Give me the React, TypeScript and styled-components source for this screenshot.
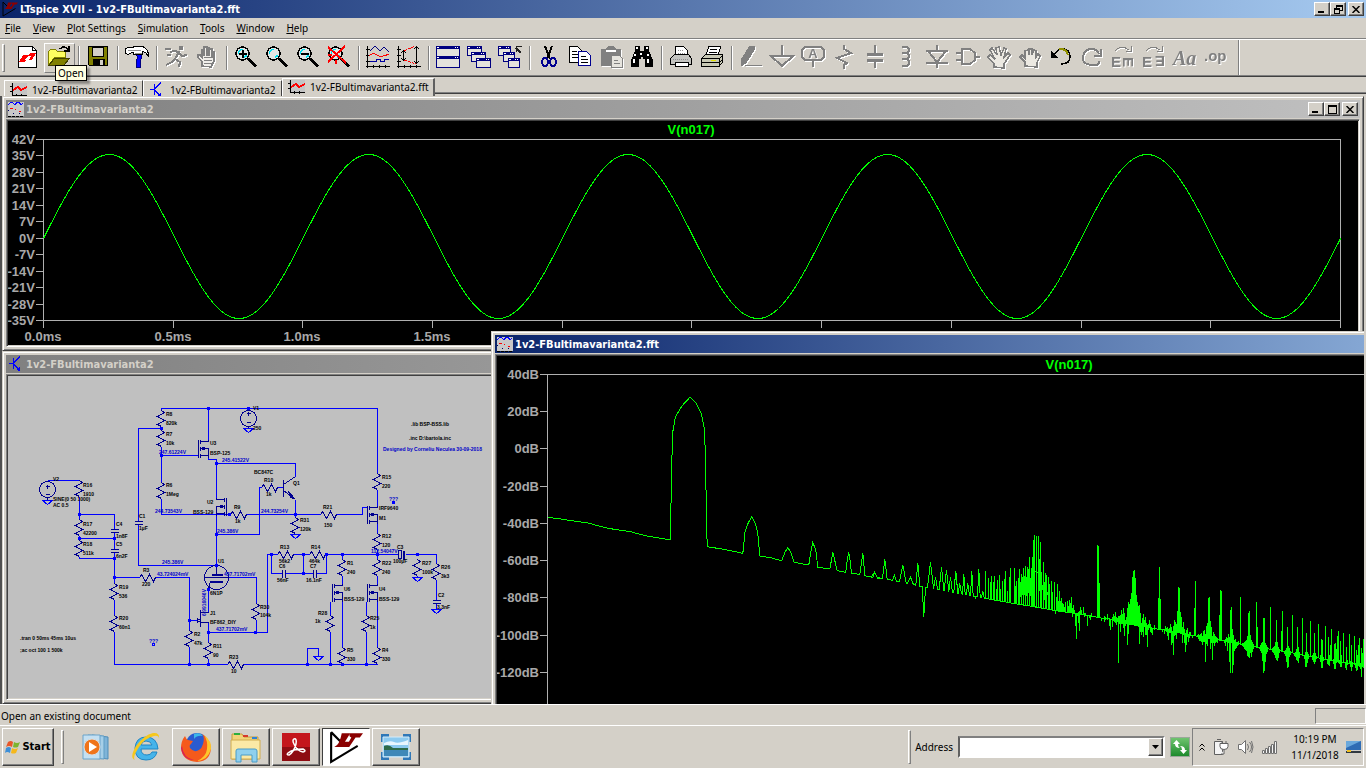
import React from "react";
import styled, { createGlobalStyle, css } from "styled-components";

const face = "#d4d0c8";
const ui = `"Noto Sans", "Liberation Sans", sans-serif`;
const captionFont = `"DejaVu Sans Condensed", "DejaVu Sans", sans-serif`;

const Global = createGlobalStyle`
  *, *::before, *::after { box-sizing: border-box; }
  body { margin: 0; background: ${face}; font: 10px/14px ${ui}; color: #000; }
  button, input { font: inherit; color: inherit; padding: 0; margin: 0; }
  svg { display: block; flex: none; }
`;

const raised = css`
  border: 1px solid;
  border-color: #fff #404040 #404040 #fff;
  box-shadow: inset -1px -1px 0 #808080;
  background: ${face};
`;

const Desktop = styled.div`
  display: flex;
  flex-direction: column;
  height: 100vh;
  min-height: 500px;
  overflow: hidden;
`;

const Caption = styled.header<{ $tone: "active" | "idle" | "app" }>`
  display: flex;
  align-items: center;
  flex: none;
  height: 18px;
  padding: 0 2px;
  gap: 2px;
  color: ${(p) => (p.$tone === "idle" ? "#d4d0c8" : "#fff")};
  background: ${(p) =>
    p.$tone === "idle"
      ? "linear-gradient(90deg, #808080, #c0c0c0)"
      : "linear-gradient(90deg, #0a246a, #a6caf0)"};
`;

const CaptionText = styled.h1`
  flex: 1;
  margin: 0;
  padding-top: 1px;
  font: bold 11px/17px ${captionFont};
  white-space: nowrap;
`;

const CaptionButtons = styled.div`
  display: flex;
  button:last-child { margin-left: 2px; }
`;

const CaptionButton = styled.button`
  ${raised}
  display: grid;
  place-items: center;
  width: 16px;
  height: 14px;
`;

const MenuBar = styled.nav`
  display: flex;
  flex: none;
  height: 20px;
  align-items: center;
`;

const MenuItem = styled.button`
  border: 0;
  background: none;
  padding: 0 6px 1px;
  &:first-child { padding-left: 5px; }
  &::first-letter { text-decoration: underline; }
`;

const ToolBar = styled.div`
  display: flex;
  flex: none;
  align-items: center;
  height: 39px;
  border-top: 1px solid #808080;
  border-bottom: 1px solid #404040;
  box-shadow: inset 0 1px 0 #fff, inset 0 -1px 0 #808080;
`;

const Gripper = styled.span`
  width: 3px;
  height: 28px;
  margin: 0 8px 0 2px;
  border: 1px solid;
  border-color: #fff #808080 #808080 #fff;
`;

const Divider = styled.span`
  width: 2px;
  height: 24px;
  margin: 0 3px;
  background: linear-gradient(90deg, #808080 50%, #fff 50%);
`;

const ToolEnd = styled.span`
  width: 2px;
  height: 35px;
  margin-left: 6px;
  background: linear-gradient(90deg, #808080 50%, #fff 50%);
`;

const ToolButton = styled.button<{ $hot?: boolean }>`
  position: relative;
  display: grid;
  place-items: center;
  width: 31px;
  height: 30px;
  padding: 0 1px 2px 0;
  background: none;
  border: 1px solid;
  border-color: ${(p) => (p.$hot ? "#fff #808080 #808080 #fff" : "transparent")};
  &:disabled svg { filter: drop-shadow(1px 1px 0 #fff); color: #808080; }
`;

const Tip = styled.span`
  position: absolute;
  z-index: 5;
  left: 10px;
  top: 21px;
  padding: 0 2px;
  border: 1px solid #000;
  background: #ffffe1;
  box-shadow: 3px 3px 2px rgba(0, 0, 0, 0.35);
`;

const TabStrip = styled.div`
  display: flex;
  flex: none;
  height: 19px;
  padding-left: 4px;
`;

const Tab = styled.button<{ $on?: boolean }>`
  display: flex;
  align-items: center;
  gap: 5px;
  flex: none;
  width: ${(p) => (p.$on ? 153 : 139)}px;
  height: ${(p) => (p.$on ? 18 : 16)}px;
  margin-top: ${(p) => (p.$on ? 1 : 3)}px;
  padding: ${(p) => (p.$on ? "0 0 1px 5px" : "3px 0 0 5px")};
  border: 0;
  border-top: 1px solid #fff;
  border-left: 1px solid #fff;
  border-right: ${(p) => (p.$on ? "2px solid #606060" : "1px solid #404040")};
  background: ${face};
  white-space: nowrap;
`;

const TabFill = styled.span`
  flex: 1;
  height: 17px;
  border-bottom: 1px solid #404040;
  box-shadow: inset 0 -1px 0 #808080;
`;

const Workspace = styled.main`
  position: relative;
  flex: 1;
  min-height: 0;
  overflow: hidden;
  background: ${face};
  border-left: 2px solid #505050;
  border-right: 2px solid ${face};
`;

const Child = styled.section<{ $x: number; $y: number; $h: number; $r: number }>`
  position: absolute;
  left: ${(p) => p.$x}px;
  right: ${(p) => p.$r}px;
  top: ${(p) => p.$y}px;
  height: ${(p) => p.$h}px;
  display: flex;
  flex-direction: column;
  padding: 3px;
  border: 1px solid;
  border-color: ${face} #404040 #404040 ${face};
  box-shadow: inset 1px 1px 0 #fff, inset -1px -1px 0 #808080;
  background: ${face};
`;

const Client = styled.div<{ $paper: string }>`
  flex: 1;
  min-height: 0;
  margin-top: 1px;
  overflow: hidden;
  border: 1px solid;
  border-color: #808080 #fff #fff #808080;
  padding: 1px;
  box-shadow: inset 1px 1px 0 #404040, inset -1px -1px 0 ${face};
  background: ${(p) => p.$paper};
`;

const Plot = styled.svg`
  width: 100%;
  shape-rendering: crispEdges;
  fill: none;
  text {
    font: bold 13px "Liberation Sans", Arial, sans-serif;
    fill: #a8a8a8;
    stroke: none;
  }
  text.trace { fill: #00ff00; }
`;

const Sheet = styled(Plot)`
  text, text.net {
    font: bold 5px "Liberation Sans", Arial, sans-serif;
    fill: #000;
  }
  text.net { fill: #0000c8; }
`;

const StatusBar = styled.footer`
  display: flex;
  flex: none;
  justify-content: space-between;
  align-items: center;
  height: 21px;
  padding: 2px 0 0 1px;
  border-top: 1px solid #fff;
`;

const StatusCell = styled.span`
  width: 51px;
  height: 16px;
  border: 1px solid;
  border-color: #808080 #fff #fff #808080;
`;

const TaskBar = styled.footer`
  display: flex;
  flex: none;
  align-items: center;
  height: 43px;
  padding: 0 2px;
  border-top: 1px solid #fff;
`;

const StartButton = styled.button`
  ${raised}
  display: flex;
  align-items: center;
  justify-content: center;
  gap: 1px;
  width: 52px;
  height: 38px;
  && { font: bold 11px/16px ${captionFont}; }
`;

const TaskGrip = styled.span<{ $gap: number }>`
  width: 3px;
  height: 34px;
  margin: 0 ${(p) => p.$gap}px 0 7px;
  border: 1px solid;
  border-color: #fff #808080 #808080 #fff;
`;

const Launch = styled.button<{ $kind: "flat" | "up" | "down" }>`
  display: grid;
  place-items: center;
  width: 48px;
  height: 38px;
  margin-right: 2px;
  ${(p) => p.$kind === "flat" && css`border: 0; background: none;`}
  ${(p) => p.$kind === "up" && raised}
  ${(p) =>
    p.$kind === "down" &&
    css`
      border: 1px solid;
      border-color: #404040 #fff #fff #404040;
      background: #fff;
    `}
`;

const Spring = styled.span`
  flex: 1;
`;

const AddressLabel = styled.label`
  margin-right: 5px;
`;

const Combo = styled.span`
  display: flex;
  width: 207px;
  height: 22px;
  border: 2px solid;
  border-color: #808080 #fff #fff #606060;
  background: #fff;
  input { flex: 1; min-width: 0; border: 0; outline: 0; background: #fff; }
`;

const Drop = styled.button`
  ${raised}
  display: grid;
  place-items: center;
  width: 15px;
`;

const GoButton = styled.button`
  display: grid;
  place-items: center;
  width: 20px;
  height: 20px;
  margin: 0 2px 0 5px;
  border: 1px solid #9aa89a;
  background: linear-gradient(#6fc46f, #1d8a2c);
`;

const Tray = styled.div`
  display: flex;
  align-items: center;
  width: 172px;
  height: 38px;
  padding: 0 2px 0 6px;
  border: 1px solid;
  border-color: #808080 #fff #fff #808080;
`;

const TrayIcons = styled.div`
  display: flex;
  align-items: center;
  gap: 8px;
`;

const Clock = styled.time`
  flex: 1;
  padding-left: 6px;
  text-align: center;
  line-height: 16px;
`;

/* ---------- toolbar glyphs, each on a 24 x 24 grid ---------- */

const GlyphBox = styled.svg`
  overflow: visible;
  fill: none;
  stroke: currentColor;
  shape-rendering: crispEdges;
`;

const Glyph = ({ children }: { children: React.ReactNode }) => (
  <GlyphBox width="24" height="24" viewBox="0 0 24 24" aria-hidden="true">
    {children}
  </GlyphBox>
);

const GlyphText = styled.text<{ $face: "sans" | "script"; $size: number }>`
  font: ${(p) => (p.$face === "script" ? "italic bold" : "bold")} ${(p) => p.$size}px
    ${(p) => (p.$face === "script" ? `"Liberation Serif", serif` : `"Liberation Sans", sans-serif`)};
  fill: currentColor;
  stroke: none;
`;

const Lens = ({ children }: { children?: React.ReactNode }) => (
  <Glyph>
    <circle cx="8.5" cy="8.5" r="6.5" fill="#e2e6e4" stroke="#000" strokeWidth="1.5" />
    <path d="M4.5 8.5a4 4 0 0 1 4-4M10 12.5q2.5-1 2.5-3" stroke="#00e0f0" strokeWidth="1.5" />
    <path d="M14 13.5l8 8" stroke="#000" strokeWidth="3.5" />
    {children}
  </Glyph>
);

const MiniWin = ({ x, y, w, h }: { x: number; y: number; w: number; h: number }) => (
  <g>
    <rect x={x + 0.5} y={y + 0.5} width={w} height={h} fill="#e4e2dc" stroke="#000080" />
    <path d={`M${x} ${y + 1.5}h${w + 1}`} stroke="#000080" strokeWidth="3" />
    <path d={`M${x + 1} ${y + 1.5}h2M${x + w - 4} ${y + 1.5}h1M${x + w - 2} ${y + 1.5}h1`} stroke="#fff" />
  </g>
);

const glyphs: Record<string, React.ReactNode> = {
  New: (
    <Glyph>
      <path d="M2.5 1.5h14l4 4v17h-18z" fill="#fff" stroke="#000" />
      <path d="M16.5 1.5v4h4" stroke="#000" />
      <path d="M3 17l4-7h6l1-2h6l-4 7h-6l-1 2zm6-2h4l2-4h-3z" fill="#f00" stroke="none" fillRule="evenodd" />
    </Glyph>
  ),
  Open: (
    <Glyph>
      <path d="M1.5 20.5v-14l2-2h5l2 2h8v6h-11z" fill="#ffff60" stroke="#808000" />
      <path d="M1.5 20.5l6-7h15l-6 7z" fill="#808000" stroke="#404000" />
      <path d="M13 4q4-5 8 1M22 1v5h-5" stroke="#000" strokeWidth="1.5" />
    </Glyph>
  ),
  Save: (
    <Glyph>
      <path d="M2.5 1.5h19v19h-18l-1-1z" fill="#808000" stroke="#000" />
      <path d="M6.5 2h11v9h-11z" fill="#d4d0c8" stroke="#000" />
      <path d="M7 14h11v6H7z" fill="#000" stroke="#000" />
      <path d="M14 15h3v5h-3z" fill="#d4d0c8" stroke="none" />
    </Glyph>
  ),
  "Control Panel": (
    <Glyph>
      <path d="M11.5 8h5v5l-1 2v7h-4v-7l1-2z" fill="#0000ff" stroke="#000080" />
      <path d="M.5 3.5l3-1h3l4-1h7q6 2 6 10-3-5-6-5v3h-9v-2h-2l-3 2-3-1z" fill="#fff" stroke="#000" />
      <path d="M3 5h13M10 8h7" stroke="#909090" />
    </Glyph>
  ),
  Run: (
    <Glyph>
      <g strokeWidth="2">
        <circle cx="17" cy="3" r="1.5" fill="currentColor" />
        <path d="M6 7l4-1 5 1-4 7 5 3-1 5M11 14l-3 3-6 3M15 8l3 3 5-1M1 4h6M3 10h4" />
      </g>
    </Glyph>
  ),
  Halt: (
    <Glyph>
      <path d="M7 21v-4l-4-5v-2h2l2 2V5h2v6V2h3v9V3h2v8V4h3v8V7h2v9l-3 6z" fill="#f0eeea" strokeWidth="1.5" />
      <path d="M9 12h9M9 15h8M9 18h8M9 21h7" />
    </Glyph>
  ),
  "Zoom In": <Lens><path d="M5 8.5h8M8.5 5v8" stroke="#000" strokeWidth="2" /></Lens>,
  "Zoom Pan": <Lens />,
  "Zoom Out": <Lens><path d="M5 8.5h8" stroke="#000" strokeWidth="2" /></Lens>,
  "Zoom Fit": <Lens><path d="M1 2l18 16M18 1L1 17M1 10h4M9 15v4" stroke="#f00" strokeWidth="2" /></Lens>,
  Autorange: (
    <Glyph>
      <path d="M1.5 1v22M0 21.5h24M0 4.5h4M0 10.5h4M0 16.5h4M7.5 20v3M13.5 20v3M19.5 20v3" stroke="#000" />
      <path d="M4 6l5-5 5 5 4-4 5 5" stroke="#000080" />
      <path d="M3 11q4-4 8-1t12-1" stroke="#f00" />
      <path d="M4 16.5h6v-2h4v2h4v-2h5" stroke="#0000a0" />
    </Glyph>
  ),
  "Plot Range": (
    <Glyph>
      <path d="M1.5 1v22M0 21.5h24M0 4.5h4M0 10.5h4M0 16.5h4M7.5 20v3M13.5 20v3M19.5 20v3" stroke="#000" />
      <path d="M7 6l11-5M7 15l12 4" stroke="#f00" strokeDasharray="3 1" />
      <path d="M6.5 6v9M4 8l2.5-2L9 8M4 13l2.5 2L9 13M19.5 2v16M17 4l2.5-2L22 4M17 16l2.5 2 2.5-2" stroke="#000" />
    </Glyph>
  ),
  Tile: (
    <Glyph>
      <MiniWin x={0} y={1} w={23} h={10} />
      <MiniWin x={0} y={11} w={23} h={11} />
    </Glyph>
  ),
  Cascade: (
    <Glyph>
      <MiniWin x={0} y={1} w={14} h={9} />
      <MiniWin x={4} y={7} w={14} h={9} />
      <MiniWin x={9} y={13} w={14} h={9} />
    </Glyph>
  ),
  "Close All": (
    <Glyph>
      <MiniWin x={0} y={1} w={12} h={9} />
      <MiniWin x={5} y={7} w={11} h={9} />
      <MiniWin x={10} y={13} w={11} h={9} />
      <path d="M23 8l-5-5M18.5 7V1.5H24" stroke="#202020" strokeWidth="1.5" />
    </Glyph>
  ),
  Cut: (
    <Glyph>
      <path d="M8 1l5 13M15 1l-5 13" stroke="#000" strokeWidth="2" />
      <ellipse cx="8" cy="17" rx="3" ry="4" stroke="#000090" strokeWidth="2" />
      <ellipse cx="16" cy="17" rx="3" ry="4" stroke="#000090" strokeWidth="2" />
    </Glyph>
  ),
  Copy: (
    <Glyph>
      <path d="M1.5 1.5h8l4 4v12h-12z" fill="#fff" stroke="#000" />
      <path d="M4 6h5M4 9h6M4 12h6" stroke="#000" />
      <path d="M10.5 6.5h8l4 4v10h-12z" fill="#fff" stroke="#000090" />
      <path d="M13 11h5M13 14h7M13 17h7" stroke="#000" />
    </Glyph>
  ),
  Paste: (
    <Glyph>
      <path d="M2 4h5l2-3h6l2 3h5v17H2z" fill="currentColor" stroke="none" />
      <path d="M7 6h10" stroke="#fff" strokeWidth="2" />
      <path d="M12.5 10.5h8l3 3v9h-11z" fill="#e6e4de" />
      <path d="M15 15h4M15 18h6" />
    </Glyph>
  ),
  Find: (
    <Glyph>
      <path d="M5 1h5v5h4V1h5v5l4 9v7h-8v-8h-2v-2h-2v2H9v8H1v-7l4-9z" fill="#000" stroke="none" />
      <path d="M6 3h2M16 3h2M5 9v2M4 14v4M11 8v2M18 9v2M18 14v4" stroke="#fff" strokeWidth="1.5" />
    </Glyph>
  ),
  Print: (
    <Glyph>
      <path d="M6.5 10.5v-9h8l4 4v5" fill="#fff" stroke="#000" />
      <path d="M1.5 19.5v-6l4-4h14l3 4v6z" fill="#c4c4c0" stroke="#000" />
      <path d="M6 17.5h13v4H6z" fill="#fff" stroke="#000" />
      <path d="M9 5h6M9 8h8M4 14h16" stroke="#909090" strokeDasharray="1 1" />
    </Glyph>
  ),
  "Print Setup": (
    <Glyph>
      <path d="M6 10l3-9h12l-3 9" fill="#fff" stroke="#000" />
      <path d="M10 4h7M9 7h8" stroke="#000" />
      <path d="M1.5 13.5l4-4h17v8l-4 4h-17z" fill="#c8c8b4" stroke="#000" />
      <path d="M1 13.5h18v8M1 17.5h18M19 14l4-4M19 18l4-4" stroke="#000" />
      <path d="M11 15.5h5" stroke="#e0e000" />
    </Glyph>
  ),
  Wire: (
    <Glyph>
      <path d="M11 1h4v4L7 18l-5 3 0-6z" fill="currentColor" />
      <path d="M6 20.5h17" />
    </Glyph>
  ),
  Ground: <Glyph><path d="M12 0v11M1 11h22L12 21z" strokeWidth="2" /></Glyph>,
  "Net Label": (
    <Glyph>
      <path d="M4 2h16l3 3v7l-3 3H4l-3-3V5zM12 15v7" strokeWidth="2" />
      <GlyphText $face="sans" $size={13} x="12" y="13" textAnchor="middle">A</GlyphText>
    </Glyph>
  ),
  Resistor: <Glyph><path d="M12 0v4l7 4-14 5 10 5-3 2v4" strokeWidth="2" /></Glyph>,
  Capacitor: <Glyph><path d="M12 0v10M12 15v8" strokeWidth="2" /><path d="M4 9.5h16M4 15.5h16" strokeWidth="3" /></Glyph>,
  Inductor: <Glyph><path d="M8 2h5l2 2v2l-2 2h-5M10 8h3l2 2v2l-2 2h-5M10 14h3l2 2v3l-2 2H8" strokeWidth="2" /></Glyph>,
  Diode: <Glyph><path d="M12 0v6M1 6h22M3 6l9 11 9-11M1 18h22M12 18v5" strokeWidth="2" /></Glyph>,
  Component: <Glyph><path d="M6 4h8l5 4v7l-5 4H6zM0 8h6M0 15h6M19 11.5h5" strokeWidth="2" /></Glyph>,
  Move: (
    <Glyph>
      <path d="M7 22v-3l-6-7 2-2 5 4-5-9 2-2 5 7-1-7 3-1 2 8 3-7 2 1-2 8 4-4 2 2-6 9v4z" fill="#ece9e2" strokeWidth="1.5" />
    </Glyph>
  ),
  Drag: <Glyph><path d="M7 21v-4l-5-5 2-2 3 3V6l3-1 1 5V4h3v6l2-5 2 1v6l2-3 2 2-3 7v4z" fill="#ece9e2" strokeWidth="1.5" /></Glyph>,
  Undo: (
    <Glyph>
      <path d="M5 10q4-7 10-6t6 8-9 7" stroke="#000" strokeWidth="1.5" />
      <path d="M10 4q7-1 9 6" stroke="#909000" strokeWidth="2" />
      <path d="M2 5v8h7z" fill="#000" stroke="none" />
    </Glyph>
  ),
  Redo: <Glyph><path d="M19 9q-3-6-9-5t-7 8 8 8 8-4M21 4v7h-7" strokeWidth="2" /></Glyph>,
  Rotate: (
    <Glyph>
      <path d="M4 6q6-7 14-1M20 1v5h-5" />
      <GlyphText $face="sans" $size={15} x="0" y="22">E</GlyphText>
      <GlyphText $face="sans" $size={15} transform="translate(12 12) rotate(90)">E</GlyphText>
    </Glyph>
  ),
  Mirror: (
    <Glyph>
      <path d="M4 6q6-7 14-1M20 1v5h-5" />
      <GlyphText $face="sans" $size={15} x="0" y="22">E</GlyphText>
      <GlyphText $face="sans" $size={15} transform="translate(23 11) rotate(180)">E</GlyphText>
    </Glyph>
  ),
  Text: <Glyph><GlyphText $face="script" $size={20} x="0" y="20">Aa</GlyphText></Glyph>,
  "SPICE Directive": <Glyph><GlyphText $face="sans" $size={15} x="0" y="16">.op</GlyphText></Glyph>,
};

const toolGroups: string[][] = [
  ["New", "Open"],
  ["Save"],
  ["Control Panel"],
  ["Run", "Halt"],
  ["Zoom In", "Zoom Pan", "Zoom Out", "Zoom Fit"],
  ["Autorange", "Plot Range"],
  ["Tile", "Cascade", "Close All"],
  ["Cut", "Copy", "Paste", "Find"],
  ["Print", "Print Setup"],
  ["Wire", "Ground", "Net Label", "Resistor", "Capacitor", "Inductor", "Diode", "Component", "Move", "Drag", "Undo", "Redo", "Rotate", "Mirror", "Text", "SPICE Directive"],
];
const greyed = new Set(["Run", "Halt", "Paste", ...toolGroups[9].filter((n) => n !== "Undo")]);

/* ---------- small window icons ---------- */

const Logo = ({ size }: { size: number }) => (
  <svg width={size} height={size} viewBox="0 0 32 32" aria-hidden="true">
    <path d="M2 2v28L27 15M2 2l9 9" fill="none" stroke="#000" strokeWidth="2" />
    <path d="M12 3h8l-5 8h4l-3 5H5q5-2 7-13zM20 3h12l-3 4h-4l-6 9h-3l5-9q-3-1-1-4z" fill="#8b0000" />
  </svg>
);

const WaveIcon = () => (
  <svg width="16" height="16" viewBox="0 0 16 16" shapeRendering="crispEdges" aria-hidden="true">
    <path d="M0 1h16v14H0z" fill="#c8c8c8" />
    <path d="M0 4l3-3h1l3 3 2-3h2l2 3 2-2" fill="none" stroke="#00f" />
    <path d="M2 7.5h3M7 8.5h1M11 10.5h2" stroke="#f00" />
    <path d="M0 15.5h16" stroke="#000" strokeDasharray="3 1" />
    <path d="M5 12.5h1M11 12.5h1M0 9.5h1" stroke="#000060" />
  </svg>
);

const PlotIcon = () => (
  <svg width="17" height="14" viewBox="0 0 17 14" shapeRendering="crispEdges" aria-hidden="true">
    <path d="M1 0h16v12H1z" fill="#c4c4c4" />
    <path d="M2.5 0v13M0 3.5h3M0 8.5h3M2 12.5h15M6.5 11v3M11.5 11v3" stroke="#000" fill="none" />
    <path d="M3 7l5-3 3 3 6-3" stroke="#f00" strokeWidth="2" fill="none" />
  </svg>
);

const BjtIcon = () => (
  <svg width="16" height="16" viewBox="0 0 16 16" shapeRendering="crispEdges" aria-hidden="true">
    <path d="M1 7.5h4M5.5 2v11M6 6l6-5M6 9l6 5" stroke="#00f" strokeWidth="1.5" fill="none" />
    <path d="M12 15V10l-4 4z" fill="#00f" />
  </svg>
);

const Min = () => <svg width="8" height="8" viewBox="0 0 8 8" aria-hidden="true"><path d="M0 6h6v2H0z" /></svg>;
const Max = () => <svg width="9" height="9" viewBox="0 0 9 9" shapeRendering="crispEdges" aria-hidden="true"><path d="M.5 0v8.500h8V.5H0M0 1h9" fill="none" stroke="#000" /></svg>;
const Restore = () => <svg width="9" height="9" viewBox="0 0 9 9" shapeRendering="crispEdges" aria-hidden="true"><path d="M2.5 3V.5h6v5H6M2 1h7M.5 3.5h5v5h-5zM0 4h6" fill="none" stroke="#000" /></svg>;
const Close = () => <svg width="8" height="7" viewBox="0 0 8 7" aria-hidden="true"><path d="M.5 0l7 7M7.5 0l-7 7" stroke="#000" strokeWidth="1.5" /></svg>;

const Controls = ({ restore }: { restore?: boolean }) => (
  <CaptionButtons>
    <CaptionButton aria-label="Minimize"><Min /></CaptionButton>
    <CaptionButton aria-label={restore ? "Restore" : "Maximize"}>{restore ? <Restore /> : <Max />}</CaptionButton>
    <CaptionButton aria-label="Close"><Close /></CaptionButton>
  </CaptionButtons>
);

/* ---------- waveform plot ---------- */

const volts = [139, 155, 172, 188, 205, 221, 238, 254, 271, 287, 304, 320];
const times = [43, 173, 302, 432, 562, 691, 821, 951, 1081, 1210, 1340];
const timeLabels = ["0.0ms", "0.5ms", "1.0ms", "1.5ms"];

const sine = Array.from({ length: 1298 }, (_, i) => {
  const y = 236.5 - 82 * Math.sin((2 * Math.PI * (i - 1)) / 259.4);
  return `${43.5 + i},${y.toFixed(1)}`;
}).join(" ");

const Waveform = () => (
  <Plot height="225" viewBox="8 121 1340 225" preserveAspectRatio="xMinYMin meet" role="img" aria-label="V(n017) against time">
    <path d="M43.5 139.5H1340.5V320.5H43.5z" stroke="#b0b0b0" />
    {volts.map((y, i) => (
      <g key={y}>
        <path d={`M36 ${y + 0.5}h8`} stroke="#b0b0b0" />
        <text x="35" y={y + 5} textAnchor="end">{42 - 7 * i}V</text>
      </g>
    ))}
    {times.map((x, i) => (
      <g key={x}>
        <path d={`M${x + 0.5} 320v8`} stroke="#b0b0b0" />
        {timeLabels[i] && <text x={x} y="341" textAnchor="middle">{timeLabels[i]}</text>}
      </g>
    ))}
    <text className="trace" x="691" y="134" textAnchor="middle">V(n017)</text>
    <polyline points={sine} stroke="#00ff00" />
  </Plot>
);

/* ---------- spectrum plot: data kept in thirds of a unit ---------- */

const decibels = [374, 411, 448, 486, 523, 560, 597, 635, 672];

const lowBand: [number, number][] = [
  [202, 577], [240, 582], [322, 594], [382, 610], [450, 620], [495, 632], [570, 645], [571, 567], [574, 408],
  [577, 320], [585, 275], [600, 250], [612, 234], [629, 216], [645, 232], [662, 265], [672, 312], [675, 405],
  [678, 577], [680, 665], [730, 673], [787, 685], [790, 660], [793, 622], [800, 600], [814, 574], [825, 598],
  [832, 625], [835, 660], [838, 693], [870, 698], [904, 707], [912, 685], [922, 667], [932, 685], [941, 712],
  [985, 720], [990, 685], [997, 652], [1006, 675], [1012, 727], [1048, 732], [1053, 705], [1057, 682],
  [1063, 707], [1070, 737], [1096, 742], [1100, 705], [1105, 682], [1110, 715], [1113, 745], [1138, 748],
  [1142, 720], [1147, 685], [1150, 715], [1153, 752], [1177, 757], [1183, 742], [1190, 757], [1200, 760],
];

const floor: [number, number][] = [
  [0, 231], [35, 236], [67, 241], [88, 245], [110, 250], [135, 255], [155, 260], [185, 265], [220, 271],
  [250, 278], [280, 283], [300, 287], [330, 292], [370, 300], [400, 305], [435, 311], [490, 320], [540, 329],
  [575, 335], [600, 338], [650, 346], [690, 354], [740, 360], [800, 375], [860, 387], [900, 392], [960, 405],
  [1050, 421], [1110, 432], [1150, 440], [1200, 448], [1250, 455], [1300, 466], [1350, 475], [1400, 484],
  [1450, 492], [1484, 498],
];

const floorAt = (x: number) => {
  const i = Math.max(1, floor.findIndex((p) => p[0] >= x));
  const [x0, y0] = floor[i - 1];
  const [x1, y1] = floor[i];
  return y0 + ((y1 - y0) * (x - x0)) / (x1 - x0);
};

/* harmonics with a visible skirt: x, tip, half width */
const cones: [number, number, number][] = [
  [12, 216, 9], [43, 177, 7], [72, 226, 6], [97, 195, 10], [120, 232, 9], [142, 189, 6], [160, 352, 5],
  [180, 186, 9], [195, 231, 6], [213, 201, 7], [228, 210, 7], [240, 231, 6], [256, 213, 6], [268, 250, 5],
  [280, 222, 4], [292, 250, 5], [304, 213, 4], [325, 207, 4], [337, 273, 4],
];

const highBand: [number, number][] = (() => {
  const pts: [number, number][] = [[0, 231]];
  let last = 0;
  cones.forEach(([x, tip, w]) => {
    const a = Math.max(last, x - w);
    pts.push([a, floorAt(a)], [x, tip], [x + w, floorAt(x + w)]);
    last = x + w;
  });
  return pts.concat(floor.filter((p) => p[0] > last));
})();

/* single pixel columns rising from the floor */
const spikes: [number, number][] = [
  [316, 298], [346, 213], [355, 235], [361, 246], [364, 228], [370, 246], [373, 228], [379, 268], [382, 240],
  [388, 225], [391, 268], [397, 243], [403, 237], [406, 213], [412, 273], [418, 231], [421, 204], [433, 204],
  [436, 258], [439, 243], [445, 234], [448, 207], [454, 222], [460, 204], [466, 198], [472, 201], [478, 171],
  [484, 204], [487, 171], [490, 120], [493, 105], [499, 108], [505, 108], [511, 126], [514, 216], [520, 186],
  [526, 220], [529, 225], [535, 231], [538, 252], [544, 243], [547, 275], [553, 246], [559, 290], [562, 252],
  [568, 273], [574, 294], [580, 312], [586, 306], [592, 303], [598, 300], [604, 291], [610, 315], [631, 322],
  [640, 322], [682, 135], [685, 138], [688, 250],
];

/* columns given as x, top, bottom */
const columns: [number, number, number][] = [
  [451, 246, 290], [457, 231, 285], [463, 228, 285], [469, 231, 288], [475, 207, 280], [481, 234, 288], [496, 213, 216], [502, 216, 220], [508, 178, 272],
  [517, 255, 270], [523, 246, 300], [532, 275, 285],
  [557, 330, 341], [565, 303, 335], [571, 303, 335], [577, 310, 335], [583, 320, 335], [595, 318, 338], [601, 310, 338],
  [607, 325, 352], [613, 330, 342], [616, 338, 378], [619, 338, 417], [622, 340, 348], [625, 336, 370], [628, 333, 392], [634, 330, 345], [643, 338, 352],
  [646, 340, 346], [652, 345, 378], [658, 346, 354], [661, 345, 360], [664, 340, 350], [694, 354, 362], [703, 348, 365], [706, 352, 360], [712, 342, 360],
  [718, 354, 378], [721, 356, 391], [727, 350, 382], [730, 342, 362], [733, 348, 366], [736, 336, 370], [739, 352, 375],
  [742, 354, 366], [745, 348, 489], [748, 348, 372], [751, 345, 395], [754, 330, 372], [757, 342, 372], [760, 324, 385],
  [763, 338, 407], [766, 360, 378], [769, 350, 372], [772, 324, 435], [775, 306, 402], [778, 312, 375], [781, 297, 375],
  [784, 279, 375], [787, 231, 375], [790, 213, 376], [793, 210, 378], [796, 234, 378], [799, 285, 378], [802, 306, 378],
  [805, 318, 380], [808, 315, 432], [811, 338, 395], [814, 370, 404], [817, 354, 395], [820, 342, 411], [823, 360, 380],
  [826, 351, 404], [829, 370, 404], [832, 375, 441], [835, 372, 390], [838, 360, 382], [841, 372, 395], [844, 382, 398],
  [847, 384, 404], [853, 375, 390], [865, 294, 388], [868, 201, 388], [871, 297, 388], [877, 388, 396], [883, 386, 402], [886, 378, 390],
  [889, 384, 395], [892, 380, 408], [895, 388, 420], [898, 384, 398], [901, 372, 400], [904, 380, 435], [907, 392, 430], [910, 378, 465],
  [913, 360, 408], [916, 366, 405], [919, 372, 418], [922, 333, 400], [925, 261, 400], [928, 264, 400], [931, 336, 402],
  [934, 351, 402], [937, 380, 430], [940, 366, 405], [943, 387, 430], [946, 400, 457], [949, 390, 435], [952, 384, 410],
  [955, 402, 427], [958, 396, 415], [961, 396, 408], [967, 404, 414], [974, 324, 408], [976, 243, 408], [982, 405, 412], [985, 402, 416], [988, 406, 422],
  [991, 402, 422], [994, 400, 425], [997, 408, 435], [1000, 392, 425], [1003, 390, 425], [1006, 402, 486], [1009, 378, 432],
  [1012, 369, 438], [1015, 294, 418], [1018, 291, 418], [1021, 362, 447], [1024, 380, 430], [1027, 408, 480], [1030, 396, 430],
  [1033, 402, 437], [1036, 408, 428], [1039, 412, 425], [1042, 415, 430], [1049, 345, 420], [1052, 270, 421], [1055, 273, 421],
  [1063, 420, 428], [1066, 416, 438], [1069, 410, 425], [1072, 414, 453], [1075, 402, 428], [1078, 410, 486], [1081, 330, 519],
  [1084, 321, 430], [1087, 387, 519], [1090, 405, 495], [1093, 420, 453], [1096, 417, 447], [1099, 425, 445], [1102, 425, 438],
  [1105, 423, 436], [1111, 291, 433], [1117, 430, 438], [1120, 428, 442], [1123, 426, 447], [1126, 422, 450], [1129, 420, 453],
  [1132, 408, 468], [1135, 339, 470], [1138, 333, 474], [1141, 405, 458], [1144, 420, 470], [1147, 426, 455], [1150, 433, 448],
  [1160, 306, 442], [1162, 381, 442], [1168, 440, 448], [1171, 436, 453], [1174, 430, 460], [1177, 426, 483], [1180, 354, 519],
  [1183, 354, 513], [1186, 430, 486], [1189, 436, 462], [1192, 440, 456], [1201, 321, 448], [1207, 445, 456], [1210, 442, 460],
  [1213, 438, 465], [1216, 426, 474], [1219, 360, 480], [1222, 426, 483], [1225, 440, 474], [1228, 446, 460], [1235, 393, 455],
  [1237, 333, 455], [1243, 454, 463], [1246, 450, 468], [1249, 445, 486], [1252, 381, 504], [1255, 438, 500], [1258, 445, 472],
  [1261, 452, 466], [1267, 345, 460], [1273, 460, 468], [1276, 457, 472], [1279, 447, 480], [1282, 381, 483], [1285, 441, 489],
  [1288, 455, 475], [1297, 354, 465], [1303, 465, 478], [1306, 457, 501], [1309, 399, 501], [1312, 457, 490], [1315, 463, 478],
  [1321, 363, 470], [1327, 465, 480], [1330, 460, 486], [1333, 399, 492], [1336, 460, 486], [1339, 468, 478], [1345, 372, 475],
  [1351, 465, 485], [1354, 417, 504], [1357, 420, 504], [1360, 472, 484], [1366, 378, 480], [1372, 477, 492], [1375, 411, 496],
  [1378, 465, 498], [1381, 435, 482], [1384, 387, 484], [1390, 478, 492], [1393, 432, 507], [1396, 430, 507], [1399, 447, 490],
  [1402, 408, 486], [1405, 393, 488], [1408, 480, 492], [1411, 423, 500], [1414, 465, 500], [1420, 399, 490], [1426, 485, 504],
  [1429, 441, 510], [1432, 480, 495], [1438, 402, 493], [1441, 484, 500], [1444, 435, 513], [1447, 485, 500], [1453, 408, 496],
  [1456, 488, 504], [1459, 450, 513], [1462, 465, 510], [1465, 435, 498], [1468, 414, 500], [1471, 490, 508], [1474, 444, 530],
  [1477, 459, 500], [1480, 417, 503],
];

const line = (pts: [number, number][], ox: number, oy: number) =>
  pts.map(([x, y]) => `${(ox + x / 3).toFixed(1)},${(oy + y / 3).toFixed(1)}`).join(" ");

const column = (x: number, a: number, b: number) =>
  `M${Math.floor(870 + x / 3) + 0.5} ${(500 + a / 3).toFixed(1)}V${(500 + b / 3).toFixed(1)}`;

const columnPath =
  spikes.map(([x, y]) => column(x, y, floorAt(x) + 1)).join("") + columns.map(([x, a, b]) => column(x, a, b)).join("");

const Spectrum = () => (
  <Plot height="348" viewBox="497 356 860 348" preserveAspectRatio="xMinYMin meet" role="img" aria-label="V(n017) spectrum">
    <path d="M547.5 720V374.5H1400" stroke="#b0b0b0" />
    {decibels.map((y, i) => (
      <g key={y}>
        <path d={`M540 ${y + 0.5}h8`} stroke="#b0b0b0" />
        <text x="539" y={y + 5} textAnchor="end">{40 - 20 * i}dB</text>
      </g>
    ))}
    <text className="trace" x="1069" y="369" textAnchor="middle">V(n017)</text>
    <g stroke="#00ff00">
      <polyline points={line(lowBand, 480.5, 325)} />
      <polyline points={line(highBand, 870.5, 500)} />
      <path d={columnPath} />
    </g>
  </Plot>
);

/* ---------- schematic ---------- */

const resV: [number, number][] = [
  [161, 410], [161, 430], [161, 482], [79, 480], [79, 519], [79, 540], [114, 583], [114, 615], [189, 630], [208, 642],
  [256, 603], [295, 517], [377, 473], [377, 533], [342, 559], [377, 559], [417, 559], [436, 563], [330, 615], [366, 615],
  [342, 647], [377, 647],
];
const resH: [number, number][] = [[139, 577], [230, 514], [261, 487], [320, 514], [277, 554], [309, 554], [227, 664]];
const grounds: [number, number][] = [[47, 500], [248, 428], [295, 534], [417, 577], [436, 609], [318, 656]];
const joints: [number, number][] = [
  [208, 408], [248, 408], [161, 428], [161, 455], [216, 463], [216, 534], [216, 565], [229, 514], [295, 514], [79, 514],
  [79, 538], [114, 538], [114, 558], [114, 577], [189, 620], [208, 589], [208, 632], [255, 632], [189, 664], [208, 664],
  [271, 554], [303, 554], [326, 554], [303, 573], [342, 554], [377, 554], [417, 554], [307, 664], [330, 664], [342, 664],
  [366, 664], [393, 502],
];

const wires =
  "M161 410V408H377V473 M208 408V440 M161 426V430 M161 428H138V521 M138 524V565H216 M161 446V482 M161 455H198 M161 498V514H230 " +
  "M208 447V459H216V497 M216 463H295V476 M216 514V565 M216 534H259V487H261 M277 487H283 M295 499V517 M246 514H320 M336 514H362V507H367 " +
  "M377 489V506 M377 522V533 M377 549V559 M295 533V534 M47 480H79 M79 496V519 M79 514H114V529 M114 532V549 M79 535V540 M79 538H114 " +
  "M79 556V558H114 M114 552V583 M114 577H139 M114 599V615 M114 631V664H227 M155 577H189V630 M189 646V664 M189 620H197 M208 588V612 " +
  "M208 622V642 M208 658V664 M208 632H267V554H277 M228 577H256V603 M256 619V632 M293 554H309 M325 554H398 M405 554H436V563 " +
  "M271 554V573H281 M285 573H313 M316 573H326V554 M303 554V573 M342 554V559 M342 575V585 M342 593V647 M377 575V585 M377 593V647 " +
  "M330 601V615 M366 601V615 M330 631V664 M366 631V664 M243 664H377 M342 663V664 M377 663V664 M307 664V648H318V656 M417 575V577 M436 579V600 M436 603V609";

const mos = (x: number, y: number, d: number) =>
  `M${x} ${y}v18 M${x + 2 * d} ${y}v4m0 3v4m0 3v4 M${x + 2 * d} ${y + 2}h${8 * d}v-2 M${x + 2 * d} ${y + 9}h${8 * d}v9 M${x + 2 * d} ${y + 16}h${8 * d} M${x + 4 * d} ${y + 8}v2h${2 * d}v-2z`;

const devices = [
  mos(198, 439, 1), mos(226, 497, -1), mos(367, 505, 1), mos(332, 583, 1), mos(367, 583, 1),
  "M283 479V496 M283 484L295 476 M283 490L295 499 M288 491L294 498L290 497z",
  "M134 521H142 M134 524H142 M110 529H118 M110 532H118 M110 549H118 M110 552H118 M282 569V577 M285 569V577 M313 569V577 M316 569V577 M432 600H440 M432 603H440",
  "M398 550H401V558H398z M200 609V626 M200 612H208 M200 622H208 M197 618L200 620L197 622z",
  "M216 565V573 M204 577H228 M47 484V488M45 486H49 M45 494H49 M248 411V415M246 413H250 M246 422H250 M248 425V428 M47 497V500",
].join(" ");

type Label = [number, number, string];
const parts: Label[] = [
  [166, 416, "R8"], [166, 425, "820k"], [166, 436, "R7"], [166, 445, "10k"], [166, 487, "R6"], [166, 496, "1Meg"],
  [210, 445, "U3"], [210, 455, "BSP-125"], [253, 410, "V1"], [253, 430, "250"], [207, 504, "U2"], [193, 514, "BSS-129"],
  [234, 509, "R9"], [235, 523, "1k"], [264, 482, "R10"], [266, 496, "1k"], [254, 474, "BC847C"], [293, 485, "Q1"],
  [323, 509, "R21"], [324, 527, "150"], [300, 522, "R31"], [300, 531, "120k"], [382, 479, "R15"], [382, 488, "220"],
  [379, 510, "IRF9640"], [379, 520, "M1"], [382, 538, "R12"], [382, 547, "120"], [397, 549, "C3"], [393, 563, "100µF"],
  [53, 481, "V2"], [53, 501, "SINE(0 50 1000)"], [53, 507, "AC 0.5"], [83, 487, "R16"], [83, 496, "1910"],
  [83, 526, "R17"], [83, 535, "42200"], [83, 546, "R18"], [83, 555, "511k"], [116, 526, "C4"], [116, 538, "1n8F"],
  [116, 546, "C5"], [116, 558, "6n2F"], [139, 518, "C1"], [139, 530, "1µF"], [143, 572, "R3"], [142, 586, "220"],
  [119, 589, "R19"], [119, 598, "536"], [119, 620, "R20"], [119, 629, "60n1"], [218, 563, "U1"], [210, 595, "6N1P"],
  [210, 615, "J1"], [210, 624, "BF862_DIY"], [194, 636, "R2"], [194, 645, "47k"], [213, 648, "R11"], [213, 657, "90"],
  [229, 659, "R23"], [231, 673, "10"], [260, 609, "R30"], [260, 617, "104k"], [280, 549, "R13"], [279, 563, "56k2"],
  [279, 568, "C6"], [277, 582, "56nF"], [311, 549, "R14"], [309, 563, "464k"], [310, 568, "C7"], [306, 582, "16.1nF"],
  [347, 565, "R1"], [347, 574, "240"], [382, 565, "R22"], [382, 574, "240"], [422, 565, "R27"], [422, 574, "100k"],
  [441, 569, "R26"], [441, 578, "3k3"], [438, 597, "C2"], [437, 609, "3.3nF"], [344, 591, "U6"], [344, 601, "BSS-129"],
  [379, 591, "U4"], [379, 601, "BSS-129"], [318, 615, "R28"], [315, 623, "1k"], [370, 620, "R25"], [370, 629, "1k"],
  [347, 652, "R5"], [347, 661, "330"], [382, 652, "R4"], [382, 661, "330"], [411, 426, ".lib BSP-BSS.lib"],
  [409, 440, ".inc D:\\bartola.inc"], [20, 640, ".tran 0 50ms 45ms 10us"], [20, 652, ";ac oct 100 1 500k"],
];
const nets: Label[] = [
  [159, 454, "247.61224V"], [222, 462, "245.41522V"], [155, 513, "244.73543V"], [217, 533, "245.386V"], [261, 513, "244.73254V"],
  [162, 564, "245.386V"], [157, 576, "43.724024mV"], [224, 576, "437.71702mV"], [216, 631, "437.71702mV"], [371, 553, "112.54047V"],
  [389, 501, "???"], [149, 643, "???"], [383, 451, "Designed by Corneliu Neculea 30-09-2018"],
];

const Schematic = () => (
  <Sheet height="322" viewBox="8 376 1340 322" preserveAspectRatio="xMinYMin meet" role="img" aria-label="Amplifier schematic">
    <g transform="translate(.5 .5)">
      <path d={wires} stroke="#0000ff" />
      <path d={devices} stroke="#000090" />
      {resV.map(([x, y]) => <path key={`v${x}-${y}`} d={`M${x} ${y}l3 2l-7 4l7 4l-7 4l4 2`} stroke="#000090" />)}
      {resH.map(([x, y]) => <path key={`h${x}-${y}`} d={`M${x} ${y}l2 -3l4 7l4 -7l4 7l2 -4`} stroke="#000090" />)}
      {grounds.map(([x, y]) => <path key={`g${x}`} d={`M${x - 5} ${y}h10l-5 4z`} stroke="#0000ff" />)}
      <circle cx="47" cy="489" r="8" stroke="#000090" />
      <circle cx="248" cy="418" r="8" stroke="#000090" />
      <circle cx="216" cy="577" r="12" stroke="#000090" />
      <path d="M211 574H222M210 581H222M403 550V559" stroke="#000090" strokeWidth="2" />
      <path d="M210 581L208 588" stroke="#000090" />
      <path d="M152 643h2v2h-2z" stroke="#0000ff" />
    </g>
    {joints.map(([x, y]) => <path key={`j${x}-${y}`} d={`M${x - 1} ${y - 1}h3v3h-3z`} fill="#0000ff" />)}
    {parts.map(([x, y, s]) => <text key={`${s}${x}-${y}`} x={x} y={y}>{s}</text>)}
    {nets.map(([x, y, s]) => <text key={`${s}${x}-${y}`} className="net" x={x} y={y}>{s}</text>)}
    <text className="net" transform="translate(206 616) rotate(-90)">6.9916046V</text>
  </Sheet>
);

/* ---------- taskbar pictures ---------- */

const Flag = () => (
  <svg width="16" height="15" viewBox="0 0 16 15" aria-hidden="true">
    <path d="M3 2q3-2 5 0L7 7Q4 5 1 7z" fill="#e8572a" />
    <path d="M9 2q3 2 6 0l-2 5q-3 1-5 0z" fill="#7db52f" />
    <path d="M1 8q3-2 5 0l-1 5q-3-2-5 0z" fill="#3d8fd8" />
    <path d="M7 8q3 2 6 0l-2 5q-3 1-5 0z" fill="#f5b81c" />
  </svg>
);

const Player = () => (
  <svg width="28" height="28" viewBox="0 0 28 28" aria-hidden="true">
    <path d="M10 2l16 2v22l-16-2z" fill="#7fb4d8" stroke="#4f8db8" />
    <path d="M6 2l16 1v23l-16-1z" fill="#a6cfe8" stroke="#5f9cc4" />
    <path d="M1 2h17v24H1z" fill="#c4e0f2" stroke="#6aa4cb" />
    <circle cx="10" cy="14" r="8" fill="#f0741a" stroke="#d8dde0" />
    <path d="M7 9l8 5-8 5z" fill="#fff" />
  </svg>
);

const Explorer = () => (
  <svg width="32" height="32" viewBox="0 0 32 32" aria-hidden="true">
    <path d="M28 18H11q0 6 6 6 4 0 5-3h5q-2 8-11 8Q5 29 5 17 6 6 16 6q11 0 12 12zm-6-4q-1-4-6-4-4 0-5 4z" fill="#46b4ea" stroke="#1f86c4" fillRule="evenodd" />
    <path d="M5 29q-6-2 1-14Q14 4 23 2q7-1 6 6 0-4-5-3-9 2-15 11Q2 27 5 29z" fill="#f6c81e" />
  </svg>
);

const Firefox = () => (
  <svg width="32" height="32" viewBox="0 0 32 32" aria-hidden="true">
    <circle cx="17" cy="13" r="11" fill="#2a5bd0" />
    <path d="M14 3q6-2 9 2-6-1-9 3z" fill="#3cb8e8" />
    <path d="M5 5q1 3 3 4l5 1-2 3q-2 1-1 4 4 5 9 2 3-2 4-6 2-7-1-10 7 4 9 13 0 14-14 15Q2 30 1 17q0-7 4-12z" fill="#f55a1c" />
    <path d="M24 4q8 6 7 14-3 11-14 12 9-4 10-12 1-8-3-14z" fill="#fdc62b" />
    <path d="M2 15q1 12 12 14Q3 29 1 17z" fill="#d61f58" />
  </svg>
);

const Folder = () => (
  <svg width="34" height="32" viewBox="0 0 34 32" aria-hidden="true">
    <path d="M3 3h10l2 3h14v22H3z" fill="#f2d377" stroke="#c39d3e" />
    <path d="M5 2h6v2H5z" fill="#2cae3c" />
    <path d="M14 4h5v2h-5z" fill="#d6392b" />
    <path d="M23 6h5v2h-5z" fill="#2e82d8" />
    <path d="M2 9h29v19H2z" fill="#fbe9a6" stroke="#d0ac4e" />
    <path d="M7 31V20q0-2 2-2h17q2 0 2 2v11h-5v-7H12v7z" fill="#8fd0ee" stroke="#4a9cc8" />
  </svg>
);

const Acrobat = () => (
  <svg width="28" height="28" viewBox="0 0 28 28" aria-hidden="true">
    <path d="M0 0h28v28H0z" fill="#c4161c" />
    <path d="M0 14h28v14H0z" fill="#8e0c12" />
    <path d="M12 6q3-1 2 5-2 8-7 11-3 0-1-2 5-4 15-4 4 2 0 3-6-1-9-8-2-4 0-5z" fill="none" stroke="#fff" strokeWidth="1.5" />
  </svg>
);

const Picture = () => (
  <svg width="30" height="26" viewBox="0 0 30 26" aria-hidden="true">
    <path d="M0 0h8v8H0zM22 0h8v8h-8zM0 18h8v8H0zM22 18h8v8h-8z" fill="#2f78b8" />
    <path d="M2 3h26v20H2z" fill="#8ccaf0" stroke="#d8ecf8" />
    <path d="M3 9q6-3 10-1t14-2v5H3z" fill="#e8f6ff" />
    <path d="M3 12q5-2 9 2h15v2H3z" fill="#2e6a4a" />
    <path d="M3 16h24v6H3z" fill="#3f88b8" />
  </svg>
);

const Plug = () => (
  <svg width="16" height="18" viewBox="0 0 16 18" fill="none" stroke="#606060" aria-hidden="true">
    <path d="M1.5 3.5h8v13h-8zM4 1.5h4" fill="#f4f4f4" />
    <path d="M7 5.5h8v3q0 3-4 3t-4-3zM9 3v2M13 3v2M11 12v4H8" fill="#fff" />
  </svg>
);

const Speaker = () => (
  <svg width="17" height="16" viewBox="0 0 17 16" fill="none" stroke="#707070" aria-hidden="true">
    <path d="M1.5 5.5h3l4-4v13l-4-4h-3z" fill="#fff" />
    <path d="M10.5 5q2 3 0 6M12.5 3q4 5 0 10M14.5 2q3 6 0 12" />
  </svg>
);

const Signal = () => (
  <svg width="16" height="13" viewBox="0 0 16 13" fill="#f4f4f4" stroke="#707070" aria-hidden="true">
    <path d="M.5 9.5h2v3h-2zM3.5 7.5h2v5h-2zM6.5 5.5h2v7h-2zM9.5 3.5h2v9h-2zM12.5 .5h2v12h-2z" />
  </svg>
);

export default function App() {
  return (
    <Desktop>
      <Global />
      <Caption $tone="app">
        <Logo size={16} />
        <CaptionText>LTspice XVII - 1v2-FBultimavarianta2.fft</CaptionText>
        <Controls restore />
      </Caption>

      <MenuBar aria-label="Main menu">
        {["File", "View", "Plot Settings", "Simulation", "Tools", "Window", "Help"].map((m) => (
          <MenuItem key={m}>{m}</MenuItem>
        ))}
      </MenuBar>

      <ToolBar role="toolbar" aria-label="Standard">
        <Gripper />
        {toolGroups.map((group, i) => (
          <React.Fragment key={group[0]}>
            {i > 0 && <Divider />}
            {group.map((name) => (
              <ToolButton key={name} aria-label={name} $hot={name === "Open"} disabled={greyed.has(name)}>
                {glyphs[name]}
                {name === "Open" && <Tip role="tooltip">Open</Tip>}
              </ToolButton>
            ))}
          </React.Fragment>
        ))}
        <ToolEnd />
      </ToolBar>

      <TabStrip role="tablist">
        <Tab role="tab"><PlotIcon />1v2-FBultimavarianta2</Tab>
        <Tab role="tab"><BjtIcon />1v2-FBultimavarianta2</Tab>
        <Tab role="tab" aria-selected $on><PlotIcon />1v2-FBultimavarianta2.fft</Tab>
        <TabFill />
      </TabStrip>

      <Workspace>
        <Child $x={0} $y={0} $h={255} $r={0}>
          <Caption $tone="idle">
            <WaveIcon />
            <CaptionText as="h2">1v2-FBultimavarianta2</CaptionText>
            <Controls />
          </Caption>
          <Client $paper="#000"><Waveform /></Client>
        </Child>
        <Child $x={0} $y={255} $h={353} $r={0}>
          <Caption $tone="idle">
            <BjtIcon />
            <CaptionText as="h2">1v2-FBultimavarianta2</CaptionText>
          </Caption>
          <Client $paper="#c0c0c0"><Schematic /></Client>
        </Child>
        <Child $x={489} $y={235} $h={400} $r={-240}>
          <Caption $tone="active">
            <WaveIcon />
            <CaptionText as="h2">1v2-FBultimavarianta2.fft</CaptionText>
          </Caption>
          <Client $paper="#000"><Spectrum /></Client>
        </Child>
      </Workspace>

      <StatusBar>
        Open an existing document
        <StatusCell />
      </StatusBar>

      <TaskBar>
        <StartButton><Flag />Start</StartButton>
        <TaskGrip $gap={8} />
        <Launch $kind="flat" aria-label="Media Player"><Player /></Launch>
        <Launch $kind="flat" aria-label="Internet Explorer"><Explorer /></Launch>
        <Launch $kind="up" aria-label="Firefox"><Firefox /></Launch>
        <Launch $kind="up" aria-label="Windows Explorer"><Folder /></Launch>
        <Launch $kind="up" aria-label="Acrobat Reader"><Acrobat /></Launch>
        <Launch $kind="down" aria-label="LTspice XVII"><Logo size={34} /></Launch>
        <Launch $kind="up" aria-label="Picture Viewer"><Picture /></Launch>
        <Spring />
        <TaskGrip $gap={4} />
        <AddressLabel htmlFor="address">Address</AddressLabel>
        <Combo>
          <input id="address" type="text" />
          <Drop aria-label="Show addresses">
            <svg width="7" height="4" viewBox="0 0 7 4" aria-hidden="true"><path d="M0 0h7L3.5 4z" /></svg>
          </Drop>
        </Combo>
        <GoButton aria-label="Refresh">
          <svg width="18" height="18" viewBox="0 0 18 18" aria-hidden="true">
            <path d="M5.5 2L9 6H7q0 3 2 4-5 0-5-4H2zM12.5 16L9 12h2q0-3-2-4 5 0 5 4h2z" fill="#fff" />
          </svg>
        </GoButton>
        <Tray>
          <TrayIcons>
            <svg width="6" height="9" viewBox="0 0 6 9" fill="none" stroke="#000" aria-hidden="true"><path d="M.5 3.5L3 1l2.5 2.5M.5 7.5L3 5l2.5 2.5" /></svg>
            <Plug />
            <Speaker />
            <Signal />
          </TrayIcons>
          <Clock dateTime="2018-11-01T22:19">10:19 PM<br />11/1/2018</Clock>
          <svg width="15" height="14" viewBox="0 0 15 14" aria-hidden="true">
            <path d="M0 1h15v9H0z" fill="#2f6cb4" /><path d="M0 1h15L0 8z" fill="#6aa8dc" /><path d="M0 11h15v2H0z" fill="#303840" /><path d="M1 10h4v2H1z" fill="#f0c020" />
          </svg>
        </Tray>
      </TaskBar>
    </Desktop>
  );
}
